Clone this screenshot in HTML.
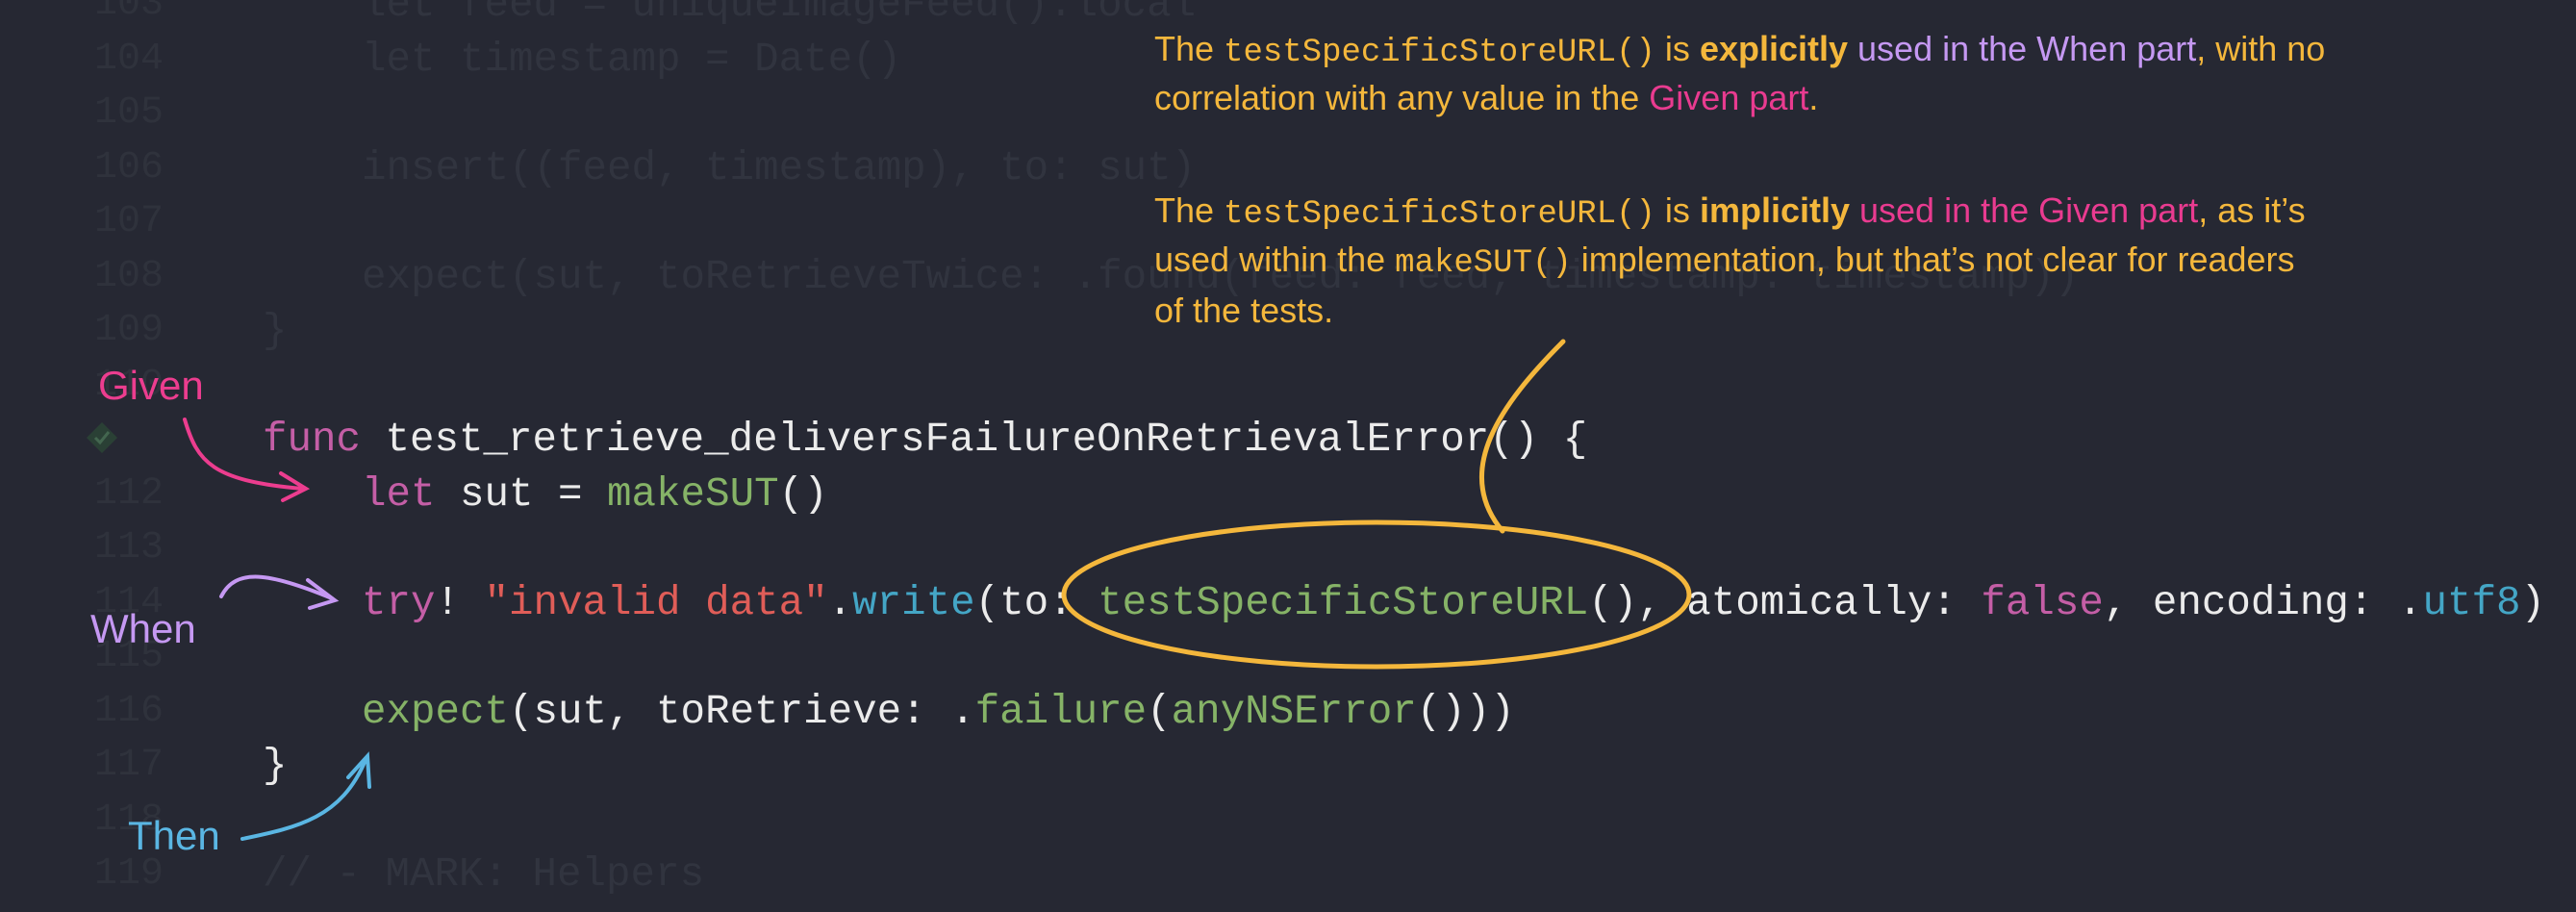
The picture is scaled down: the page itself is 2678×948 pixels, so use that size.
<!DOCTYPE html>
<html><head><meta charset="utf-8"><style>
html,body{margin:0;padding:0}
body{width:2678px;height:948px;background:#262833;position:relative;overflow:hidden;font-family:"Liberation Mono",monospace}
.ln{position:absolute;left:60px;width:110px;text-align:right;color:#2f323c;font-size:40px;line-height:56px;font-family:"Liberation Mono",monospace}
.c{position:absolute;font-size:42.5px;line-height:56px;white-space:pre;color:#ebebeb}
.d{color:#31343f}
.k{color:#c45ea6}.g{color:#86b367}.s{color:#e05d58}.b{color:#44a6c6}
.n{position:absolute;left:1200px;font-family:"Liberation Sans",sans-serif;font-size:36px;line-height:50px;color:#f4b73c;white-space:pre}
.n .m{font-family:"Liberation Mono",monospace;font-size:34px}
.p{color:#c598f2}.r{color:#e93b90}
.lab{position:absolute;font-family:"Liberation Sans",sans-serif;font-size:42px;line-height:50px}
</style></head><body>
<div class="ln" style="top:-23px">103</div>
<div class="ln" style="top:34px">104</div>
<div class="ln" style="top:90px">105</div>
<div class="ln" style="top:147px">106</div>
<div class="ln" style="top:203px">107</div>
<div class="ln" style="top:260px">108</div>
<div class="ln" style="top:316px">109</div>
<div class="ln" style="top:373px">110</div>
<div class="ln" style="top:429px;color:transparent">111</div>
<div class="ln" style="top:486px">112</div>
<div class="ln" style="top:542px">113</div>
<div class="ln" style="top:599px">114</div>
<div class="ln" style="top:655px">115</div>
<div class="ln" style="top:712px">116</div>
<div class="ln" style="top:768px">117</div>
<div class="ln" style="top:825px">118</div>
<div class="ln" style="top:881px">119</div>
<svg style="position:absolute;left:88px;top:437px" width="36" height="36" viewBox="0 0 36 36"><path d="M18 2 L34 18 L18 34 L2 18 Z" fill="#2a4035"/><path d="M11 18 L16 23 L25 12" stroke="#43664f" stroke-width="3" fill="none"/></svg>

<div class="c d" style="left:376px;top:-23px">let feed = uniqueImageFeed().local</div>
<div class="c d" style="left:376px;top:34px">let timestamp = Date()</div>
<div class="c d" style="left:376px;top:147px">insert((feed, timestamp), to: sut)</div>
<div class="c d" style="left:376px;top:260px">expect(sut, toRetrieveTwice: .found(feed: feed, timestamp: timestamp))</div>
<div class="c d" style="left:273px;top:316px">}</div>
<div class="c" style="left:273px;top:429px"><span class="k">func</span> test_retrieve_deliversFailureOnRetrievalError() {</div>
<div class="c" style="left:376px;top:486px"><span class="k">let</span> sut = <span class="g">makeSUT</span>()</div>
<div class="c" style="left:376px;top:599px"><span class="k">try</span>! <span class="s">"invalid data"</span>.<span class="b">write</span>(to: <span class="g">testSpecificStoreURL</span>(), atomically: <span class="k">false</span>, encoding: .<span class="b">utf8</span>)</div>
<div class="c" style="left:376px;top:712px"><span class="g">expect</span>(sut, toRetrieve: .<span class="g">failure</span>(<span class="g">anyNSError</span>()))</div>
<div class="c" style="left:273px;top:768px">}</div>
<div class="c d" style="left:273px;top:881px">// - MARK: Helpers</div>

<div class="n" style="top:26px">The <span class="m">testSpecificStoreURL()</span> is <b>explicitly</b> <span class="p">used in the When part</span>, with no</div>
<div class="n" style="top:77px">correlation with any value in the <span class="r">Given part</span>.</div>
<div class="n" style="top:194px">The <span class="m">testSpecificStoreURL()</span> is <b>implicitly</b> <span class="r">used in the Given part</span>, as it’s</div>
<div class="n" style="top:245px">used within the <span class="m">makeSUT()</span> implementation, but that’s not clear for readers</div>
<div class="n" style="top:298px">of the tests.</div>

<div class="lab" style="left:102px;top:376px;color:#ec3d8f">Given</div>
<div class="lab" style="left:94px;top:629px;color:#c598f2">When</div>
<div class="lab" style="left:133px;top:844px;color:#5ab6e3">Then</div>

<svg style="position:absolute;left:0;top:0" width="2678" height="948">
<g fill="none" stroke-linecap="round" stroke-width="4">
<path d="M192 436 C205 480 220 500 315 508" stroke="#ec3d8f"/>
<path d="M292 492 L318 508 L294 520" stroke="#ec3d8f"/>
<path d="M230 620 C245 590 280 595 345 622" stroke="#c598f2"/>
<path d="M320 603 L348 624 L322 632" stroke="#c598f2"/>
<path d="M252 872 C310 860 355 850 380 790" stroke="#5ab6e3"/>
<path d="M362 808 L382 786 L384 818" stroke="#5ab6e3"/>
<ellipse cx="1431" cy="618" rx="325" ry="75" stroke="#f4b73c" stroke-width="5"/>
<path d="M1625 355 C1560 420 1510 490 1562 552" stroke="#f4b73c" stroke-width="5"/>
</g>
</svg>
</body></html>
